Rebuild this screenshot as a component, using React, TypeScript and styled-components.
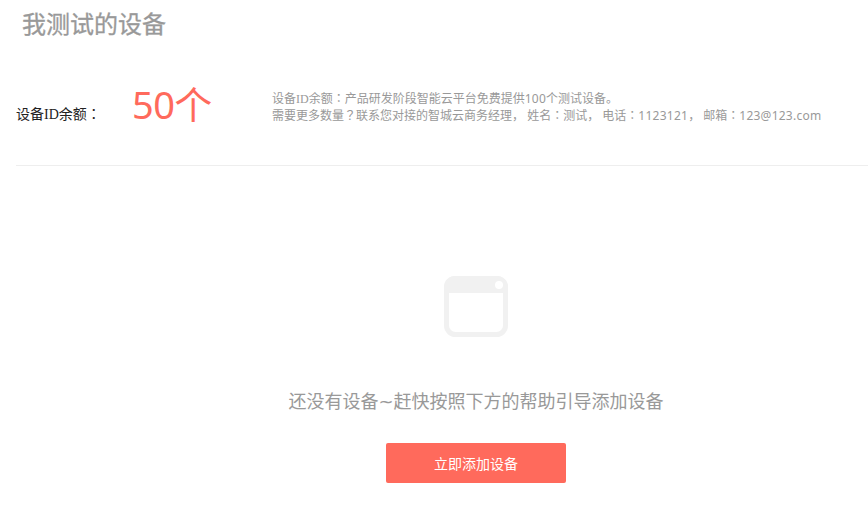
import React from "react";
import styled, { createGlobalStyle } from "styled-components";

const cjk = `"Noto Sans CJK SC", sans-serif`;

const Global = createGlobalStyle`
  html, body { margin: 0; padding: 0; background: #fff; }
  body { font-family: "Liberation Sans", ${cjk}; overflow: hidden; }
`;

const Page = styled.div`
  width: 868px;
  height: 507px;
  display: flex;
  flex-direction: column;
`;

const Title = styled.h1`
  margin: 0;
  padding: 8px 0 0 22px;
  height: 50px;
  box-sizing: border-box;
  font-size: 24px;
  line-height: 34px;
  font-weight: 400;
  -webkit-text-stroke: 0.3px #999;
  color: #999;
`;

const Summary = styled.section`
  margin: 0 0 0 16px;
  height: 115px;
  display: flex;
  align-items: flex-start;
  border-bottom: 1px solid #eee;
`;

const SerifLatin = styled.span`
  font-family: "Liberation Serif", serif;
`;

const Figure = styled.span`
  letter-spacing: 0.25px;
`;

const CenteredMark = styled.span`
  font-family: "Noto Sans CJK TC", sans-serif;
`;

const QuotaLabel = styled.span`
  width: 116px;
  height: 20px;
  margin-top: 53px;
  font-size: 14px;
  line-height: 20px;
  color: #222;
`;

const QuotaValue = styled.span`
  width: 140px;
  margin-top: 28px;
  font-family: "Noto Sans", ${cjk};
  font-size: 38px;
  line-height: 52px;
  letter-spacing: -0.6px;
  color: #ff6a5c;
`;

const Note = styled.div`
  margin-top: 39px;
  font-family: "Noto Sans", ${cjk};
  font-size: 12px;
  color: #999;
`;

const NoteLine = styled.p`
  margin: 0;
  height: 17px;
  line-height: 17px;
  white-space: nowrap;
`;

const Empty = styled.section`
  display: flex;
  flex-direction: column;
  align-items: center;
  padding: 110px 0 0 84px;
`;

const EmptyText = styled.p`
  margin: 52px 0 0;
  font-family: "DejaVu Sans", ${cjk};
  font-size: 18px;
  line-height: 26px;
  color: #999;
`;

const AddButton = styled.button`
  margin-top: 28px;
  width: 180px;
  height: 40px;
  border: 0;
  border-radius: 2px;
  background: #ff6a5c;
  color: #fff;
  font-family: inherit;
  font-size: 14px;
`;

const DeviceIcon = () => (
  <svg width="64" height="61" viewBox="0 0 64 61" fill="none">
    <rect x="2.5" y="2.5" width="59" height="56" rx="9" stroke="#f1f1f1" strokeWidth="5" />
    <path d="M11 0H53A11 11 0 0 1 64 11V17H0V11A11 11 0 0 1 11 0Z" fill="#f1f1f1" />
    <circle cx="55" cy="9" r="4" fill="#fff" />
  </svg>
);

export default function App() {
  return (
    <Page>
      <Global />
      <Title>我测试的设备</Title>
      <Summary>
        <QuotaLabel>
          设备<SerifLatin>ID</SerifLatin>余额<CenteredMark>：</CenteredMark>
        </QuotaLabel>
        <QuotaValue>50个</QuotaValue>
        <Note>
          <NoteLine>
            设备<SerifLatin>ID</SerifLatin>余额<CenteredMark>：</CenteredMark>产品研发阶段智能云平台免费提供<Figure>100</Figure>个测试设备。
          </NoteLine>
          <NoteLine>
            需要更多数量<CenteredMark>？</CenteredMark>联系您对接的智城云商务经理， 姓名<CenteredMark>：</CenteredMark>测试， 电话<CenteredMark>：</CenteredMark><Figure>1123121</Figure>， 邮箱<CenteredMark>：</CenteredMark><Figure>123@123.com</Figure>
          </NoteLine>
        </Note>
      </Summary>
      <Empty>
        <DeviceIcon />
        <EmptyText>还没有设备~赶快按照下方的帮助引导添加设备</EmptyText>
        <AddButton>立即添加设备</AddButton>
      </Empty>
    </Page>
  );
}
